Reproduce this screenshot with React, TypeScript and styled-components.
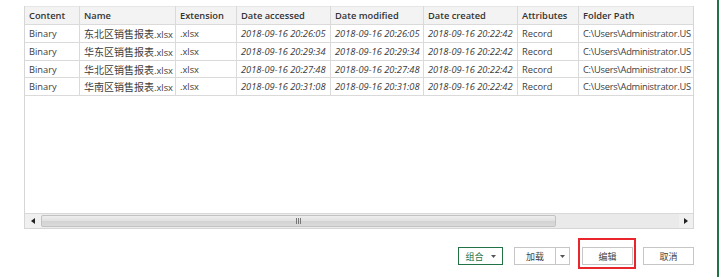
import styled, { createGlobalStyle } from 'styled-components'

const GlobalStyle = createGlobalStyle`
	html, body {
		margin: 0;
		padding: 0;
		background: #ffffff;
	}
	body {
		font-family: 'Open Sans', 'Noto Sans CJK SC', sans-serif;
		color: #3c3c3c;
	}
`

const Page = styled.div`
	display: flex;
	width: 720px;
	height: 277px;
	overflow: hidden;
`

const Main = styled.div`
	flex: 1;
	display: flex;
	flex-direction: column;
	padding: 6px 23px 0 24px;
	min-width: 0;
`

const WindowEdge = styled.div`
	width: 2px;
	margin-right: 1px;
	background: #217346;
`

const GridBox = styled.div`
	height: 223px;
	border: 1px solid #d6d6d6;
	border-top: none;
	box-sizing: border-box;
	display: flex;
	flex-direction: column;
	background: #fff;
`

const GridArea = styled.div`
	flex: 1;
	overflow: hidden;
`

const Table = styled.table`
	width: 670px;
	margin-left: -1px;
	table-layout: fixed;
	border-collapse: collapse;
	font-size: 9.3px;
`

const HeadCell = styled.th`
	height: 17.3px;
	padding: 0 4px;
	background: #f3f3f3;
	border: 1px solid #dadada;
	border-top: 1px solid #e6e6e6;
	text-align: left;
	font-weight: 600;
	color: #333;
	white-space: nowrap;
	overflow: hidden;
`

const Cell = styled.td<{ $italic?: boolean; $tight?: boolean }>`
	height: 16.7px;
	padding: 0 ${({ $tight }) => ($tight ? '2px 0 4px' : '4px')};
	border: 1px solid #dadada;
	white-space: nowrap;
	overflow: hidden;
	font-style: ${({ $italic }) => ($italic ? 'italic' : 'normal')};
	letter-spacing: ${({ $tight }) => ($tight ? '-0.25px' : 'normal')};
	color: #3c3c3c;
`

const CjkName = styled.span`
	font-family: 'Noto Sans CJK SC', sans-serif;
	font-size: 10px;
`

const Scrollbar = styled.div`
	height: 15px;
	display: flex;
	border-top: 1px solid #d9d9d9;
	background: #ececec;
	box-sizing: border-box;
`

const ArrowButton = styled.div<{ $w: number }>`
	width: ${({ $w }) => $w}px;
	display: flex;
	align-items: center;
	justify-content: center;
	background: #f0f0f0;
`

const Thumb = styled.div`
	width: 515px;
	margin: 1px 0;
	border: 1px solid #c2c2c2;
	border-radius: 2px;
	box-sizing: border-box;
	background: linear-gradient(#eeeeee, #e0e0e0 50%, #d3d3d3 51%, #dadada);
	display: flex;
	align-items: center;
	justify-content: center;
`

const Grip = styled.div`
	display: flex;
	gap: 1px;
	span {
		width: 1px;
		height: 6px;
		background: #777;
	}
`

const Track = styled.div`
	flex: 1;
	background: #eaeaea;
`

const Footer = styled.div`
	display: flex;
	justify-content: flex-end;
	align-items: center;
	margin-top: 18px;
`

const Button = styled.button<{ $w: number; $green?: boolean; $gap?: number }>`
	position: relative;
	width: ${({ $w }) => $w}px;
	height: 18px;
	margin-left: ${({ $gap }) => $gap ?? 0}px;
	padding: 0;
	background: #fff;
	border: 1px solid ${({ $green }) => ($green ? '#217346' : '#c6c6c6')};
	color: ${({ $green }) => ($green ? '#217346' : '#444')};
	font-family: 'Noto Sans CJK SC', sans-serif;
	font-size: 9px;
	display: flex;
	align-items: center;
	justify-content: center;
	gap: 7px;
	box-sizing: border-box;
`

const SplitButton = styled.div<{ $gap: number }>`
	display: flex;
	width: 56px;
	height: 18px;
	margin-left: ${({ $gap }) => $gap}px;
	border: 1px solid #c6c6c6;
	box-sizing: border-box;
	font-family: 'Noto Sans CJK SC', sans-serif;
	font-size: 9px;
	color: #444;
`

const SplitMain = styled.div`
	flex: 1;
	display: flex;
	align-items: center;
	justify-content: center;
	border-right: 1px solid #c6c6c6;
`

const SplitArrow = styled.div`
	width: 13px;
	display: flex;
	align-items: center;
	justify-content: center;
`

const Highlight = styled.div`
	position: absolute;
	left: -5px;
	right: -4px;
	top: -10px;
	bottom: -5px;
	border: 2px solid #e8262c;
	pointer-events: none;
`

const columns = [
	{ name: 'Content', w: 55 },
	{ name: 'Name', w: 96 },
	{ name: 'Extension', w: 61 },
	{ name: 'Date accessed', w: 94 },
	{ name: 'Date modified', w: 93 },
	{ name: 'Date created', w: 94 },
	{ name: 'Attributes', w: 61 },
	{ name: 'Folder Path', w: 117 },
]

const rows = [
	{ region: '东北区销售报表', time: '20:26:05' },
	{ region: '华东区销售报表', time: '20:29:34' },
	{ region: '华北区销售报表', time: '20:27:48' },
	{ region: '华南区销售报表', time: '20:31:08' },
]

function Caret({ color = '#555', dir = 'down' }: { color?: string; dir?: 'down' | 'left' | 'right' }) {
	const points =
		dir === 'down' ? '0,0 5,0 2.5,3' : dir === 'left' ? '4,0 4,6 0,3' : '0,0 0,6 4,3'
	const w = dir === 'down' ? 5 : 4
	const h = dir === 'down' ? 3 : 6
	return (
		<svg width={w} height={h} viewBox={`0 0 ${w} ${h}`}>
			<polygon points={points} fill={color} />
		</svg>
	)
}

export default function App() {
	return (
		<>
			<GlobalStyle />
			<Page>
				<Main>
					<GridBox>
						<GridArea>
							<Table>
								<colgroup>
									{columns.map(c => (
										<col key={c.name} style={{ width: c.w }} />
									))}
								</colgroup>
								<thead>
									<tr>
										{columns.map(c => (
											<HeadCell key={c.name}>{c.name}</HeadCell>
										))}
									</tr>
								</thead>
								<tbody>
									{rows.map(r => (
										<tr key={r.region}>
											<Cell>Binary</Cell>
											<Cell>
												<CjkName>{r.region}</CjkName>.xlsx
											</Cell>
											<Cell>.xlsx</Cell>
											<Cell $italic>2018-09-16 {r.time}</Cell>
											<Cell $italic>2018-09-16 {r.time}</Cell>
											<Cell $italic>2018-09-16 20:22:42</Cell>
											<Cell>Record</Cell>
											<Cell $tight>C:\Users\Administrator.US</Cell>
										</tr>
									))}
								</tbody>
							</Table>
						</GridArea>
						<Scrollbar>
							<ArrowButton $w={16}>
								<Caret dir="left" color="#222" />
							</ArrowButton>
							<Thumb>
								<Grip>
									<span />
									<span />
									<span />
								</Grip>
							</Thumb>
							<Track />
							<ArrowButton $w={14}>
								<Caret dir="right" color="#222" />
							</ArrowButton>
						</Scrollbar>
					</GridBox>
					<Footer>
						<Button $w={45} $green>
							<span>组合</span>
							<Caret />
						</Button>
						<SplitButton $gap={11}>
							<SplitMain>加载</SplitMain>
							<SplitArrow>
								<Caret />
							</SplitArrow>
						</SplitButton>
						<Button $w={51} $gap={12}>
							编辑
							<Highlight />
						</Button>
						<Button $w={51} $gap={10}>
							取消
						</Button>
					</Footer>
				</Main>
				<WindowEdge />
			</Page>
		</>
	)
}
